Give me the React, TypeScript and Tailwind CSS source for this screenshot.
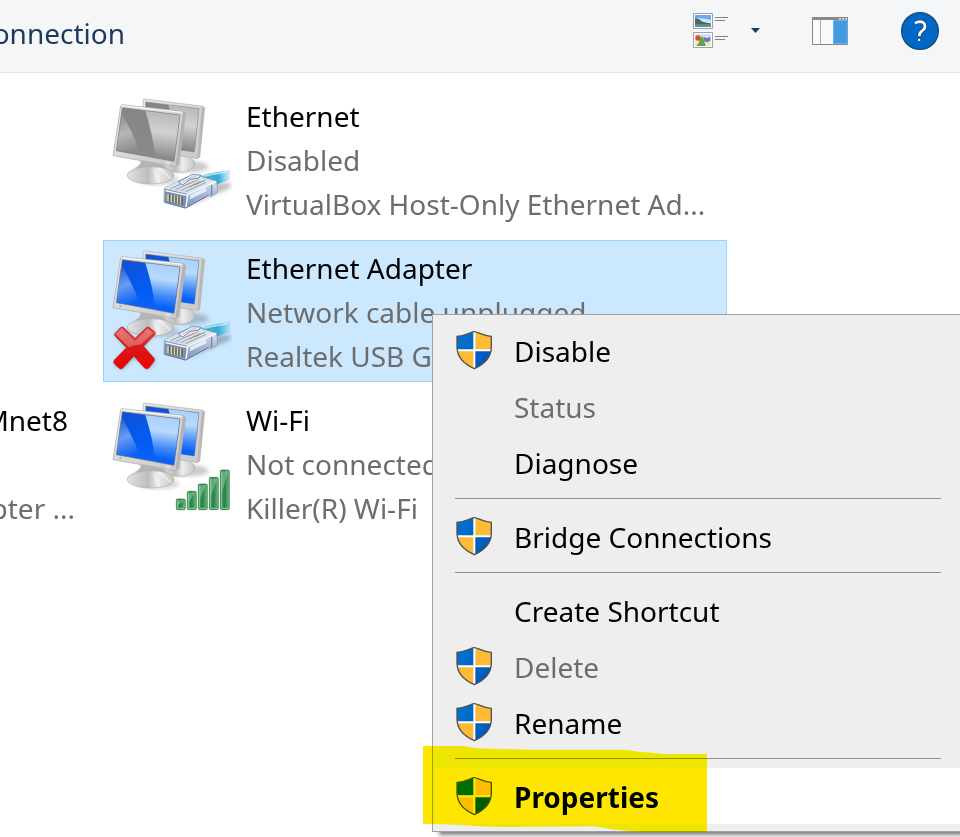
import { clsx } from 'clsx';

type BadgeKind = 'plug' | 'unplugged' | 'signal';

type Connection = {
  name: string;
  status: string;
  device: string;
  badge: BadgeKind;
  enabled: boolean;
  selected?: boolean;
};

const connections: Connection[] = [
  {
    name: 'Ethernet',
    status: 'Disabled',
    device: 'VirtualBox Host-Only Ethernet Ad...',
    badge: 'plug',
    enabled: false,
  },
  {
    name: 'Ethernet Adapter',
    status: 'Network cable unplugged',
    device: 'Realtek USB G',
    badge: 'unplugged',
    enabled: true,
    selected: true,
  },
  {
    name: 'Wi-Fi',
    status: 'Not connected',
    device: 'Killer(R) Wi-Fi',
    badge: 'signal',
    enabled: true,
  },
];

const menuGroups = [
  [
    { label: 'Disable', shield: true },
    { label: 'Status', disabled: true },
    { label: 'Diagnose' },
  ],
  [{ label: 'Bridge Connections', shield: true }],
  [
    { label: 'Create Shortcut' },
    { label: 'Delete', shield: true, disabled: true },
    { label: 'Rename', shield: true },
  ],
  [{ label: 'Properties', shield: true, active: true }],
] as { label: string; shield?: boolean; disabled?: boolean; active?: boolean }[][];

function ShieldIcon() {
  return (
    <svg viewBox="79 59 108 120" className="h-10 w-9 shrink-0" aria-hidden="true">
      <clipPath id="shield-clip">
        <path d="M134 64 C125 64 110 76 82 78 V110 C82 142 105 162 134 175 C163 162 185 142 185 110 V78 C158 76 144 64 134 64Z" />
      </clipPath>
      <linearGradient id="shield-blue" x1="0" y1="0" x2="1" y2="1">
        <stop offset="0" stopColor="#0078d4" />
        <stop offset="1" stopColor="#0052b8" />
      </linearGradient>
      <g clipPath="url(#shield-clip)">
        <rect x="79" y="59" width="108" height="120" fill="url(#shield-blue)" />
        <path d="M134 59H187V119H134Z M79 119H134V179H79Z" fill="#ffbb35" />
        <path d="M134 59V179 M79 120H187" stroke="#fff" strokeWidth="6" />
      </g>
      <path
        d="M134 64 C125 64 110 76 82 78 V110 C82 142 105 162 134 175 C163 162 185 142 185 110 V78 C158 76 144 64 134 64Z"
        fill="none"
        stroke="#505050"
        strokeWidth="4"
      />
    </svg>
  );
}

function Plug() {
  return (
    <g>
      <path d="M258 366 L392 308 L392 294 L350 294Z" fill="#000" opacity=".25" filter="url(#soft)" />
      <path d="M300 274 C330 262 350 263 390 254 V285 C372 291 361 294 350 299Z" fill="url(#cable)" />
      <path d="M304 276 C334 264 355 268 385 259" fill="none" stroke="#c5f2fa" strokeWidth="5" opacity=".8" />
      <path d="M193 310 L254 279 L300 272 L350 288 L352 322 L335 334 L323 331 L257 369 L192 351Z" fill="#b5c5df" stroke="#7485a5" strokeWidth="2" />
      <path d="M193 310 L254 279 L300 276 L345 288 L263 326Z" fill="#dbe3ec" />
      <path d="M263 326 L349 287 L351 320 L334 331 L322 327 L258 366Z" fill="url(#plugside)" />
      <path d="M270 330 L319 306 V319 L270 343Z" fill="#f3f7fd" opacity=".8" />
      <path d="M195 312 L263 327 L258 366 L193 350Z" fill="#7e90b2" />
      <path d="M204 327V348 M214 329V351 M223 331V354 M232 333V356 M241 335V358" stroke="#e8dc84" strokeWidth="4" />
      <path d="M209 328V350 M219 330V353 M228 332V356 M237 335V358 M246 337V360" stroke="#46536e" strokeWidth="3" />
      <path d="M196 317L261 331 M258 367L263 328L348 289" stroke="#fff" strokeWidth="4" fill="none" />
      <path d="M212 311 L262 288 M226 314 L280 290 M242 317 L300 290 M256 320 L318 292" stroke="#8ba0b0" strokeWidth="3" />
      <path d="M258 300 L296 284 M270 306 L306 289" stroke="#d98f78" strokeWidth="3" />
      <path d="M282 300 L316 285" stroke="#63a39b" strokeWidth="3" />
      <path d="M235 291 L275 269 L302 270 L297 279 L270 283 L248 300Z" fill="#f1f6fc" stroke="#7888a8" strokeWidth="3" />
      <path d="M246 292 L276 276 L290 276" fill="none" stroke="#a9bad4" strokeWidth="3" />
      <path d="M335 300V330" stroke="#5e7398" strokeWidth="3" />
      <path d="M194 352 L257 369 L323 332" fill="none" stroke="#5f7093" strokeWidth="3" />
    </g>
  );
}

function RedCross() {
  return (
    <g transform="translate(0 -6)">
      <path d="M45 300 L63 281 Q67 279 72 283 L105 315 L140 282 L164 295 L130 338 L166 378 L146 403 L102 367 L68 403 L43 390 L80 342Z" opacity=".3" filter="url(#soft)" />
      <path d="M45 296 L63 277 Q67 275 72 279 L105 311 L140 278 Q145 275 150 280 L164 291 Q167 296 163 300 L130 334 L162 370 Q165 375 161 380 L146 399 Q140 404 134 399 L102 363 L68 399 Q63 404 58 400 L43 386 Q39 380 44 374 L80 338 L46 304 Q42 300 45 296Z" fill="url(#cross)" stroke="#c72626" strokeWidth="3" />
      <path d="M47 297 L65 280 L105 317 L143 281 L160 293 L124 328 Q105 330 86 337Z" fill="#fff" opacity=".28" />
    </g>
  );
}

function SignalBars() {
  const bars = [
    { x: 229, y: 327 },
    { x: 262, y: 304 },
    { x: 295, y: 282 },
    { x: 328, y: 262 },
    { x: 361, y: 240 },
  ];
  return (
    <g transform="translate(0 3)">
      {bars.map((bar) => (
        <g key={bar.x}>
          <rect x={bar.x} y={bar.y} width="27" height={359 - bar.y} rx="4" fill="url(#bar)" stroke="#2a7945" strokeWidth="2" />
          <path
            d={`M${bar.x + 4} ${bar.y + 4}h19L${bar.x + 4} ${bar.y + (359 - bar.y) * 0.6}Z`}
            fill="#c9f0cf"
            opacity=".35"
          />
          <path d={`M${bar.x + 4} ${bar.y + 4}V355H${bar.x + 23}`} fill="none" stroke="#bce7c4" strokeWidth="2" />
        </g>
      ))}
    </g>
  );
}

function AdapterIcon({ badge, enabled }: { badge: BadgeKind; enabled: boolean }) {
  const screen = enabled ? 'url(#screen-on)' : 'url(#screen-off)';
  const shine = enabled ? 'url(#shine-on)' : 'url(#shine-off)';
  return (
    <svg viewBox="12 12 384 420" className="h-[140px] w-32 shrink-0" aria-hidden="true">
      <defs>
        <linearGradient id="screen-on" x1="0" y1="0" x2=".3" y2="1">
          <stop offset="0" stopColor="#1450cc" />
          <stop offset=".45" stopColor="#0559ee" />
          <stop offset="1" stopColor="#0862fa" />
        </linearGradient>
        <linearGradient id="screen-off" x1="0" y1="0" x2=".3" y2="1">
          <stop offset="0" stopColor="#858585" />
          <stop offset="1" stopColor="#8a8a8a" />
        </linearGradient>
        <linearGradient id="shine-on" x1=".3" y1="0" x2=".2" y2="1">
          <stop offset="0" stopColor="#a9d0fc" />
          <stop offset=".3" stopColor="#b8dafc" />
          <stop offset=".65" stopColor="#3f88f7" />
          <stop offset=".85" stopColor="#0862fa" />
        </linearGradient>
        <linearGradient id="shine-off" x1=".3" y1="0" x2=".2" y2="1">
          <stop offset="0" stopColor="#b8b8b8" />
          <stop offset=".4" stopColor="#d2d2d2" />
          <stop offset=".7" stopColor="#a8a8a8" />
          <stop offset=".9" stopColor="#8a8a8a" />
        </linearGradient>
        <linearGradient id="glow" x1=".2" y1="0" x2=".4" y2="1">
          <stop offset="0" stopColor="#fff" stopOpacity=".05" />
          <stop offset=".5" stopColor="#fff" stopOpacity=".4" />
          <stop offset="1" stopColor="#fff" stopOpacity="0" />
        </linearGradient>
        <linearGradient id="frame" x1="0" y1="0" x2="1" y2="1">
          <stop offset="0" stopColor="#e8e8e8" />
          <stop offset="1" stopColor="#c8c8c8" />
        </linearGradient>
        <linearGradient id="foot" x1="0" y1="0" x2="1" y2="0">
          <stop offset="0" stopColor="#e2e2e2" />
          <stop offset=".45" stopColor="#bdbdbd" />
          <stop offset=".65" stopColor="#ededed" />
          <stop offset="1" stopColor="#c4c4c4" />
        </linearGradient>
        <linearGradient id="cable" x1="0" y1="0" x2="1" y2="0">
          <stop offset="0" stopColor="#58b5cf" />
          <stop offset=".6" stopColor="#35aad6" />
          <stop offset="1" stopColor="#43b5da" stopOpacity=".2" />
        </linearGradient>
        <linearGradient id="plugside" x1="0" y1="0" x2="0" y2="1">
          <stop offset="0" stopColor="#d9e4f3" />
          <stop offset="1" stopColor="#7790bc" />
        </linearGradient>
        <linearGradient id="cross" x1="0" y1="0" x2="0" y2="1">
          <stop offset="0" stopColor="#e04a4a" />
          <stop offset=".45" stopColor="#d61b1b" />
          <stop offset="1" stopColor="#f00000" />
        </linearGradient>
        <linearGradient id="bar" x1="0" y1="0" x2="1" y2="0">
          <stop offset="0" stopColor="#3a9556" />
          <stop offset=".5" stopColor="#2a8447" />
          <stop offset="1" stopColor="#72b886" />
        </linearGradient>
        <filter id="soft">
          <feGaussianBlur stdDeviation="6" />
        </filter>
      </defs>

      <ellipse cx="262" cy="245" rx="64" ry="18" opacity=".2" filter="url(#soft)" />
      <ellipse cx="177" cy="284" rx="62" ry="16" opacity=".16" filter="url(#soft)" />

      {/* rear display */}
      <ellipse cx="232" cy="236" rx="53" ry="26" fill="url(#foot)" stroke="#b5b5b5" strokeWidth="2" />
      <path d="M133 42 L310 64 L314 68 L299 217 L292 221 L130 194 L129 45Z" fill="url(#frame)" stroke="#b0b0b0" strokeWidth="2" />
      <path d="M305 66 L314 68 L299 217 L292 221Z" fill="#b8b8b8" />
      <path d="M137 51 L297 71 L283 201 L137 180Z" fill={screen} stroke="#8a8a8a" strokeWidth="2" />
      <path d="M205 60 L296 72 L282 200 L246 195Z" fill={shine} />

      {/* front display */}
      <path d="M122 226 Q124 242 102 250 H205 Q188 246 188 234Z" fill="#b4b4b4" />
      <ellipse cx="152" cy="271" rx="70" ry="26" fill="url(#foot)" stroke="#aaa" strokeWidth="2" />
      <path d="M160 254 L178 292 M178 250 L212 280" stroke="#f8f8f8" strokeWidth="5" opacity=".6" />
      <path d="M66 59 L249 79 L257 86 L236 240 L226 245 L39 212 L62 62Z" fill="url(#frame)" stroke="#a8a8a8" strokeWidth="2" />
      <path d="M249 81 L257 86 L236 240 L226 245Z" fill="#b2b2b2" />
      <path d="M67 62 L246 82" stroke="#fafafa" strokeWidth="3" />
      <path d="M67 68 L240 90 L222 229 L49 197Z" fill={screen} stroke="#767676" strokeWidth="2" />
      <path d="M136 78 L239 91 L221 227 L166 217 Q159 150 136 78Z" fill={shine} />
      <path d="M66 85 Q92 135 107 168 L119 208 L50 196Z" fill="url(#glow)" />
      <circle cx="204" cy="235" r="5" fill="none" stroke="#f5f5f5" strokeWidth="2" />
      {enabled && <circle cx="61" cy="207" r="3" fill="#5bd657" />}

      {badge === 'signal' ? <SignalBars /> : <Plug />}
      {badge === 'unplugged' && <RedCross />}
    </svg>
  );
}

function ViewIcon() {
  return (
    <svg viewBox="69 39 105 105" className="size-[35px]" aria-hidden="true">
      <path d="M70.500 40.500H127.500V85.500H70.500Z M70.500 97.500H127.500V142.500H70.500Z" fill="#fff" stroke="#a0a0a0" strokeWidth="3" />
      <path d="M75 45H123V81H75Z" fill="#6ba9ee" />
      <path d="M75 56 Q98 52 123 60V69H75Z" fill="#d1e8f5" />
      <path d="M75 54 L87 58 L98 65 L123 71V74H75Z" fill="#48695a" />
      <path d="M75 73H123V81H75Z" fill="#5791a8" />
      <path d="M75 102H123V138H75Z" fill="#e8edb8" />
      <path d="M75 102H123V110H75Z" fill="#c5e4fa" />
      <path d="M101 111L111 114 L121 110V122L111 127 L101 122Z" fill="#7371cf" />
      <path d="M79 138 Q86 133 92 112 L98 109 Q104 124 107 138Z" fill="#65a150" />
      <circle cx="84" cy="114" r="8" fill="#e24d1c" />
      <path d="M135 52.500H174 M135 61.500H165 M135 109.500H174 M135 118.500H165" stroke="#808080" strokeWidth="3" />
    </svg>
  );
}

function PreviewPaneIcon() {
  return (
    <svg viewBox="426 51 108 84" className="h-7 w-9" aria-hidden="true">
      <path d="M427.500 52.500H532.500V133.500H427.500Z" fill="#fafafa" stroke="#85888c" strokeWidth="3" />
      <path d="M426 51H534V60H426Z" fill="#85888c" />
      <path d="M507 54h6v5h-6Z M516 54h6v5h-6Z M525 54h6v5h-6Z" fill="#d5d5d5" />
      <path d="M451.500 60V132" stroke="#b0b0b0" strokeWidth="3" />
      <path d="M490.500 61.500H531.500V130.500H490.500Z" fill="#439be0" stroke="#63b3f3" strokeWidth="3" />
    </svg>
  );
}

function HelpIcon() {
  return (
    <svg viewBox="693 36 114 114" className="size-[38px]" aria-hidden="true">
      <circle cx="750" cy="93" r="55" fill="#0068c6" stroke="#154a77" strokeWidth="4" />
      <path d="M735 70 Q742 65 750 65 Q765 66 765 79 Q765 87 756 93 Q748 98 748 108" fill="none" stroke="#113d6b" strokeWidth="12" />
      <path d="M735 70 Q742 65 750 65 Q765 66 765 79 Q765 87 756 93 Q748 98 748 108" fill="none" stroke="#fff" strokeWidth="8" />
      <rect x="743" y="115" width="9" height="9" fill="#fff" stroke="#113d6b" strokeWidth="2" />
    </svg>
  );
}

function Toolbar() {
  return (
    <header className="flex items-center border-b border-[#e3e6e9] bg-[#f4f6f8] pr-[21px] pb-[11px] text-[#1e395b]">
      <button type="button" className="flex h-[61px] w-[125px] items-center justify-end overflow-hidden pt-[5px] whitespace-nowrap">
        connection
      </button>
      <button type="button" aria-label="Change your view" className="ml-auto">
        <ViewIcon />
      </button>
      <button type="button" aria-label="More options" className="ml-[23px]">
        <svg viewBox="0 0 9 5" className="h-[5px] w-[9px]" aria-hidden="true">
          <path d="M0 0H9L4.500 5Z" fill="#1e395b" />
        </svg>
      </button>
      <button type="button" aria-label="Show the preview pane" className="ml-13">
        <PreviewPaneIcon />
      </button>
      <button type="button" aria-label="Help" className="ml-[53px]">
        <HelpIcon />
      </button>
    </header>
  );
}

function ConnectionItem({ item }: { item: Connection }) {
  return (
    <li
      className={clsx(
        'flex h-[142px] border',
        item.selected ? 'border-[#99d1ff] bg-[#cce8ff]' : 'border-transparent',
      )}
    >
      <AdapterIcon badge={item.badge} enabled={item.enabled} />
      <div className="min-w-0 pt-[5px] pl-3.5 leading-[44px] whitespace-nowrap text-[#6d6d6d]">
        <div className="text-black">{item.name}</div>
        <div>{item.status}</div>
        <div>{item.device}</div>
      </div>
    </li>
  );
}

function ContextMenu() {
  return (
    <div
      role="menu"
      className="absolute top-[314px] right-[-4px] left-[432px] border border-[#a0a0a0] bg-[#eee] px-0.5 py-[7px] shadow-[5px_5px_4px_-2px_rgba(0,0,0,0.5)]"
    >
      {menuGroups.map((group, i) => (
        <div key={group[0].label}>
          {i > 0 && <hr className="mt-2 mr-5 mb-[9px] ml-5 border-t border-[#919191]" />}
          {group.map((entry) => (
            <button
              key={entry.label}
              type="button"
              role="menuitem"
              disabled={entry.disabled}
              className={clsx(
                'flex h-14 w-full items-center gap-[22px] pl-[21px] text-left whitespace-nowrap',
                entry.disabled ? 'text-[#6d6d6d]' : 'text-black',
                entry.active && 'bg-white font-bold',
              )}
            >
              <span className="w-9 shrink-0">{entry.shield && <ShieldIcon />}</span>
              <span className="pt-0.5">{entry.label}</span>
            </button>
          ))}
        </div>
      ))}
      {/* marker stroke over the last entry */}
      <svg
        viewBox="24 30 852 258"
        className="pointer-events-none absolute -bottom-px left-[-10px] h-[86px] w-[284px] mix-blend-darken"
        aria-hidden="true"
      >
        <path
          d="M24 30H140Q165 33 185 37L345 41H620Q650 42 675 48Q710 50 745 54H876V288H680Q620 283 585 279Q550 271 525 271L270 273Q190 271 130 266L24 263Z"
          fill="#ffe600"
        />
      </svg>
    </div>
  );
}

export default function App() {
  return (
    <div className="relative min-h-screen overflow-hidden bg-white font-['Noto_Sans','Open_Sans',sans-serif] text-[28px]">
      <Toolbar />
      <main className="flex pt-[15px]">
        <div className="flex w-[103px] shrink-0 flex-col items-end overflow-hidden pt-[310px] leading-[44px] whitespace-nowrap text-[#6d6d6d]">
          <div className="pr-[35px] text-black">VMnet8</div>
          <div className="mt-11 pr-7">Adapter ...</div>
        </div>
        <ul className="flex w-[624px] flex-col gap-2.5">
          {connections.map((item) => (
            <ConnectionItem key={item.name} item={item} />
          ))}
        </ul>
      </main>
      <ContextMenu />
    </div>
  );
}
